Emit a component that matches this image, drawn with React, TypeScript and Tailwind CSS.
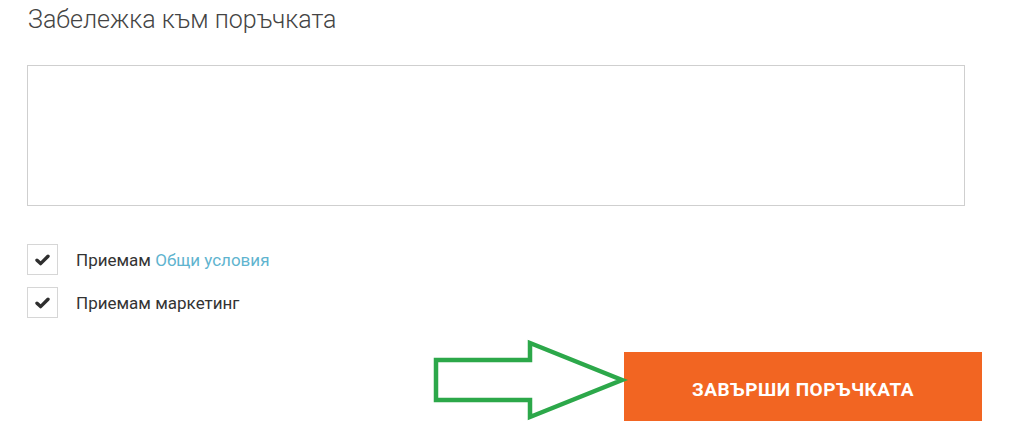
import React from "react";

function Check() {
  return (
    <div className="w-[31px] h-[31px] border border-[#d6d6d6] bg-white flex items-center justify-center shrink-0">
      <svg width="15" height="12" viewBox="0 0 15 12">
        <path d="M2 6.2 L5.6 9.6 L13 2.2" fill="none" stroke="#2f2f2f" strokeWidth="3.4" strokeLinecap="round" strokeLinejoin="round" />
      </svg>
    </div>
  );
}

export default function App() {
  return (
    <div className="relative w-[1012px] h-[421px] overflow-hidden bg-white" style={{ fontFamily: "Roboto, 'Noto Sans', sans-serif" }}>
      <div className="pl-[27px] pt-[4px]">
        <h2 className="text-[25px] font-light text-[#444] leading-[32px] pl-px">Забележка към поръчката</h2>
        <textarea className="block mt-[29px] w-[938px] h-[141px] border border-[#cfcfcf] resize-none outline-none" />
        <div className="mt-[38px] flex flex-col gap-[12px]">
          <div className="flex items-center gap-[18px]">
            <Check />
            <span className="text-[17px] text-[#333] pt-[2px]">Приемам <span className="text-[#5fb4cf]">Общи условия</span></span>
          </div>
          <div className="flex items-center gap-[18px]">
            <Check />
            <span className="text-[17px] text-[#333] pt-[2px]">Приемам маркетинг</span>
          </div>
        </div>
        <div className="flex justify-end mt-[34px] pr-[30px]">
          <button className="w-[358px] h-[76px] bg-[#f26522] text-white font-bold text-[19px] uppercase tracking-[0.5px]">ЗАВЪРШИ ПОРЪЧКАТА</button>
        </div>
      </div>
      <svg className="absolute left-0 top-0" width="1012" height="421" style={{ pointerEvents: "none" }}>
        <polygon points="436,360 530,360 530,343 622,380 530,417 530,400 436,400" fill="none" stroke="#2ca84a" strokeWidth="4.5" strokeLinejoin="miter" />
      </svg>
    </div>
  );
}
